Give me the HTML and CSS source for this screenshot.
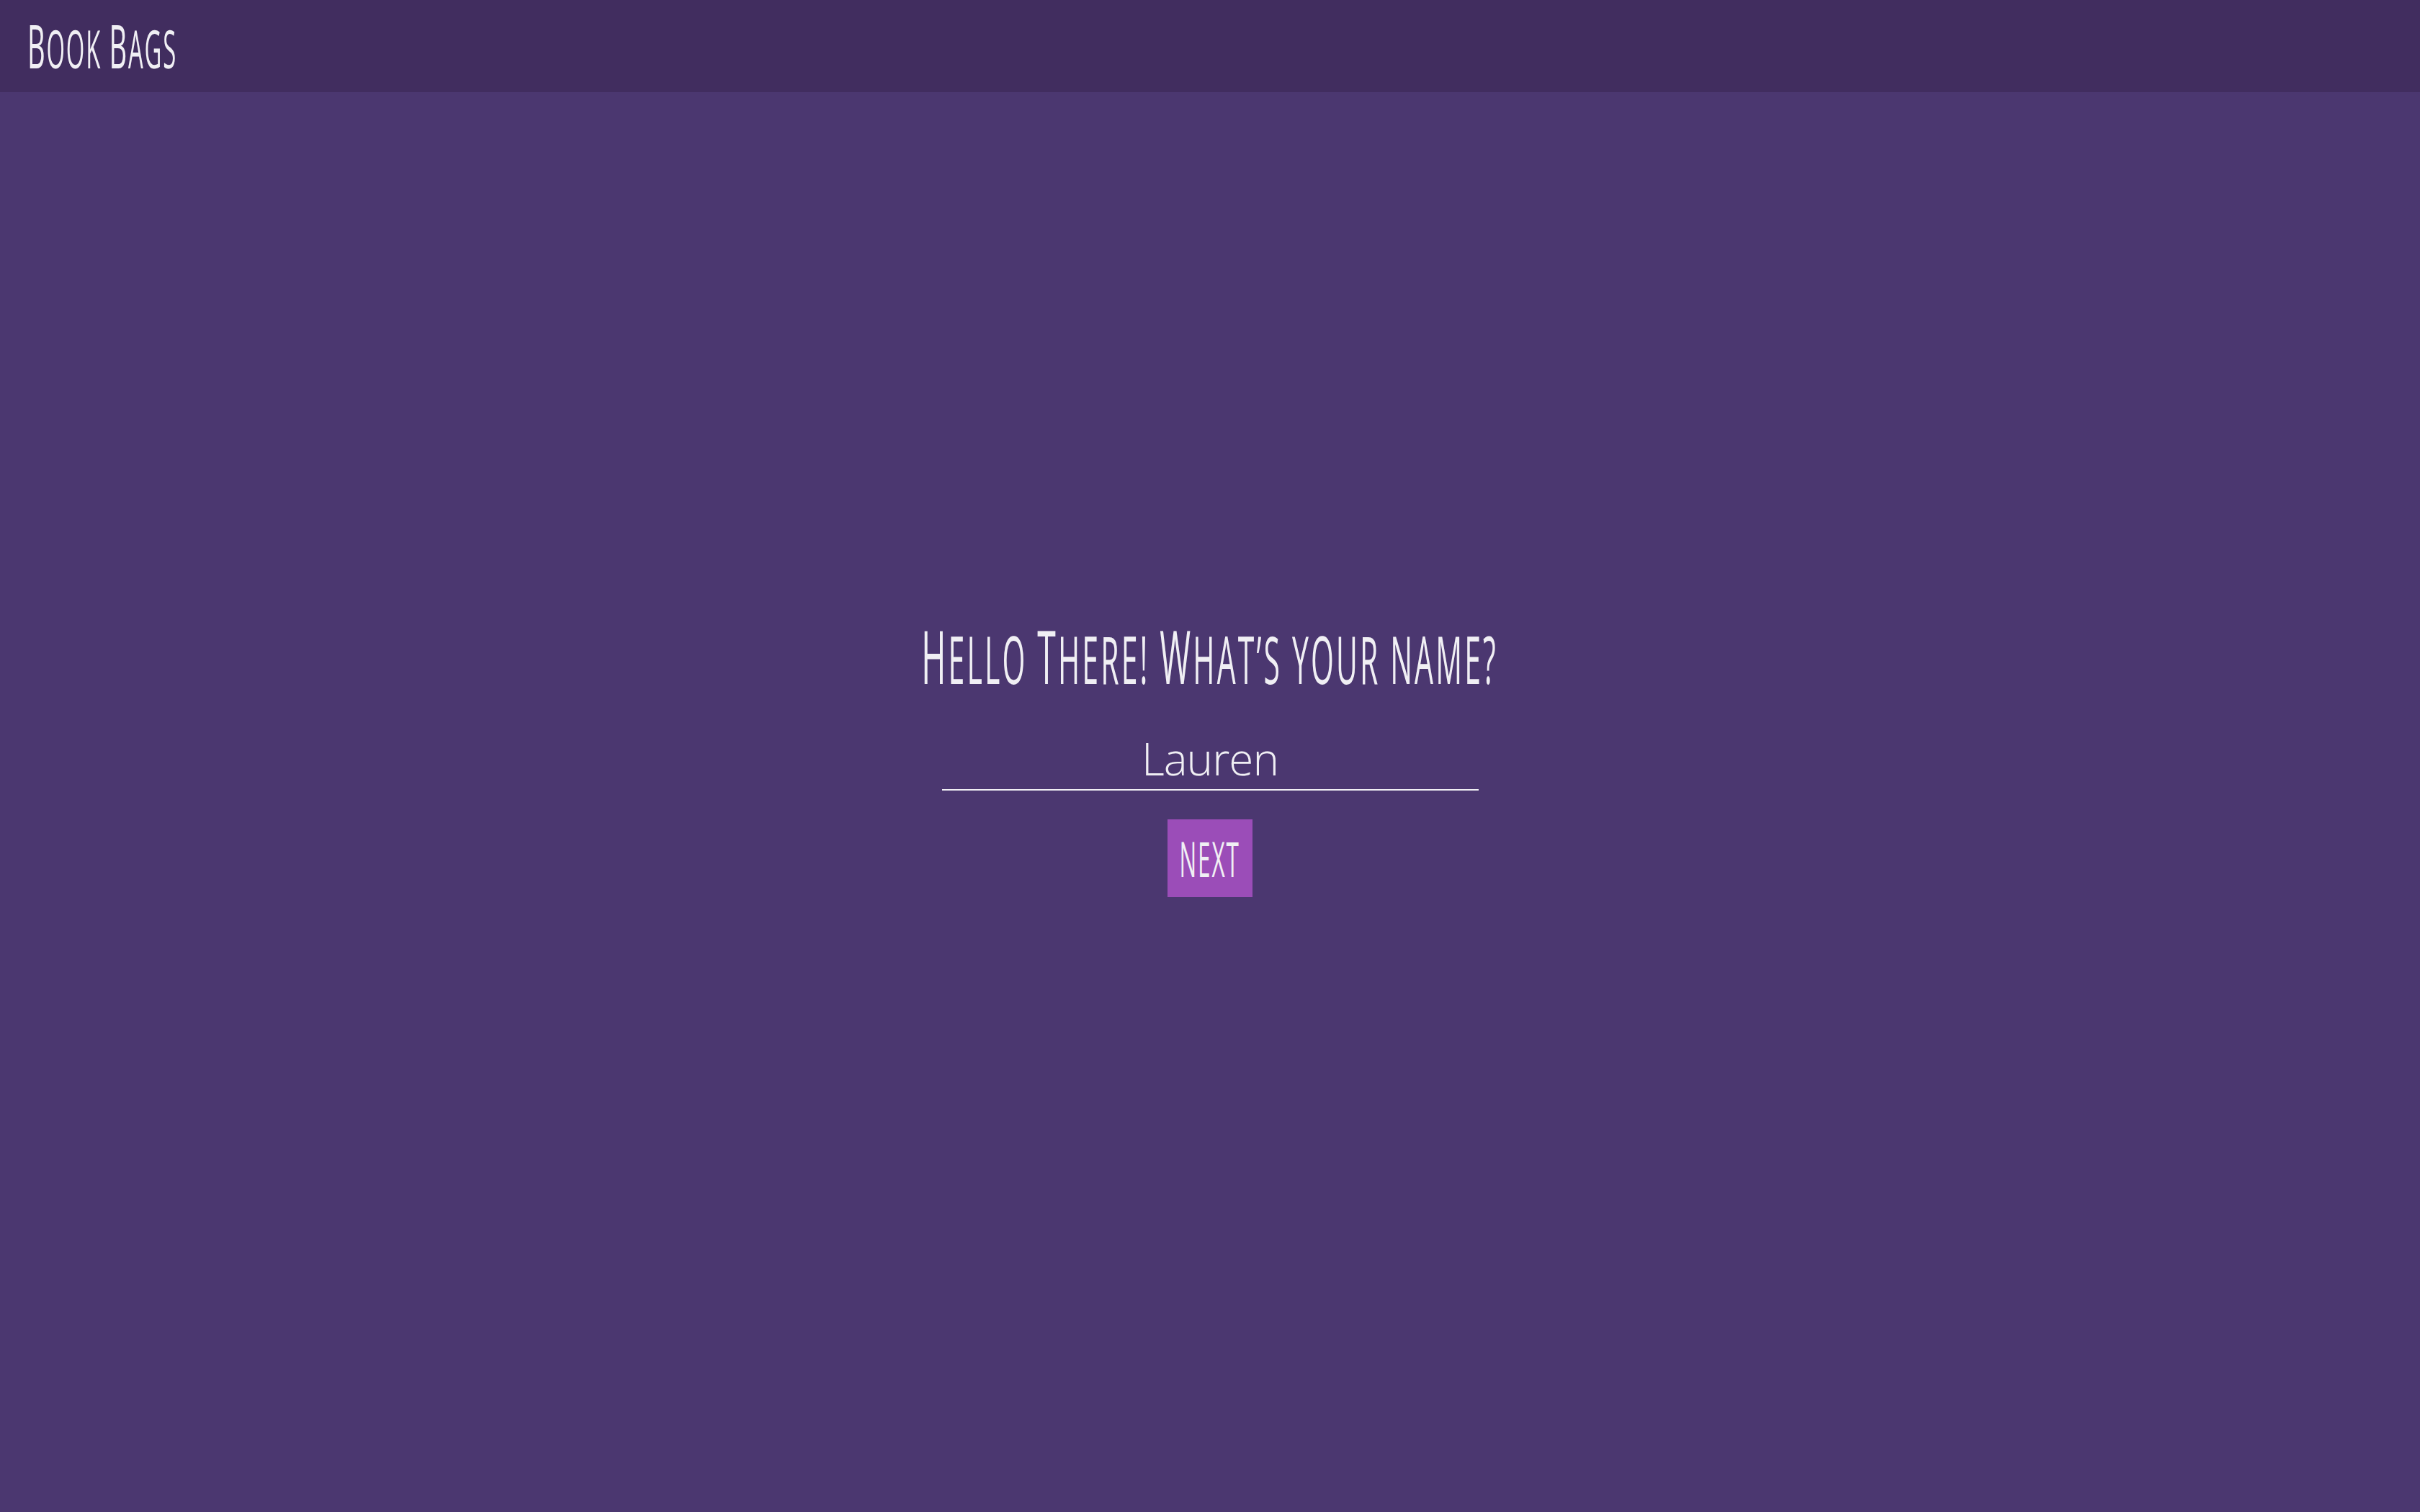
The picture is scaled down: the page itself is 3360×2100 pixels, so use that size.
FILE: index.html
```html
<!DOCTYPE html>
<html lang="en">
<head>
<meta charset="utf-8">
<title>Book Bags</title>
<link rel="stylesheet" href="styles.css">
</head>
<body>
<header class="topbar">
  <span class="brand"><span class="squeeze brand-squeeze"><span class="cap">B</span>ook <span class="cap">B</span>ags</span></span>
</header>
<main class="stage">
  <h1 class="question"><span class="squeeze question-squeeze"><span class="cap">H</span>ello <span class="cap">T</span>here! <span class="cap">W</span>hat’s your name?</span></h1>
  <input class="name-field" type="text" value="Lauren" aria-label="Your name">
  <button class="next" type="button"><span class="squeeze next-squeeze">next</span></button>
</main>
</body>
</html>
```

FILE: styles.css
```css
html, body {
  margin: 0;
  padding: 0;
}

body {
  width: 3360px;
  height: 2100px;
  overflow: hidden;
  background: #4b3770;
  color: #f0eff4;
  font-family: "Open Sans", "Liberation Sans", sans-serif;
  display: flex;
  flex-direction: column;
}

.topbar {
  height: 128px;
  flex: 0 0 128px;
  background: #412d5f;
  display: flex;
  align-items: center;
  padding-left: 38px;
  box-sizing: border-box;
}

.squeeze {
  display: inline-block;
  text-transform: uppercase;
  white-space: nowrap;
  font-weight: 400;
}

.brand {
  font-size: 73px;
  line-height: 100px;
}

.brand-squeeze {
  letter-spacing: 4px;
  transform: scaleX(0.45);
  transform-origin: left center;
}

.brand-squeeze .cap {
  font-size: 85px;
}

.stage {
  flex: 1 1 auto;
  display: flex;
  flex-direction: column;
  align-items: center;
  padding-top: 732px;
}

.question {
  margin: 0;
  font-size: 91px;
  font-weight: 400;
  line-height: 100px;
  text-align: center;
}

.question-squeeze {
  letter-spacing: 7px;
  transform: scaleX(0.45);
  transform-origin: center center;
}

.question-squeeze .cap {
  font-size: 103px;
}

.name-field {
  margin-top: 45px;
  width: 745px;
  height: 86px;
  padding: 0;
  border: 0;
  border-bottom: 2px solid #f0eff4;
  background: transparent;
  color: #f0eff4;
  font-family: "Open Sans", "Liberation Sans", sans-serif;
  font-size: 62px;
  font-weight: 300;
  letter-spacing: -1px;
  text-align: center;
  outline: none;
}

.next {
  margin-top: 40px;
  width: 118px;
  height: 108px;
  padding: 0;
  border: 0;
  background: #9b4db8;
  color: #f0eff4;
  font-family: "Open Sans", "Liberation Sans", sans-serif;
  font-size: 67px;
  line-height: 108px;
  display: flex;
  align-items: center;
  justify-content: center;
  cursor: pointer;
}

.next-squeeze {
  letter-spacing: 4px;
  transform: scaleX(0.47);
  transform-origin: center center;
}
```
